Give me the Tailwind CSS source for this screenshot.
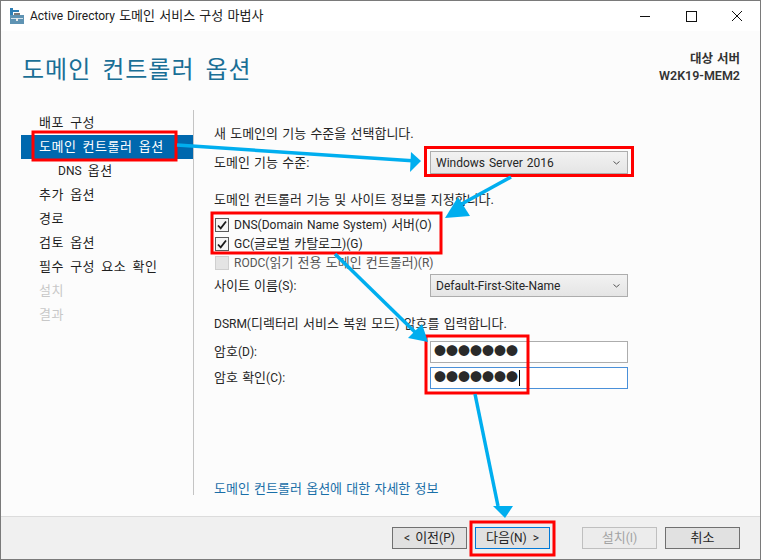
<!DOCTYPE html>
<html lang="ko">
<head>
<meta charset="utf-8">
<script src="https://cdn.jsdelivr.net/npm/@tailwindcss/browser@4"></script>
</head>
<body class="m-0 bg-white">
<div class="relative w-[761px] h-[560px] overflow-hidden flex flex-col bg-[#fcfcfc] border border-[#7a7a7a] font-['Roboto','Noto_Sans_CJK_KR',sans-serif] text-[13px] leading-[18px] text-[#262626] [word-spacing:1px]">
  <!-- title bar -->
  <div class="h-[30px] shrink-0 bg-white flex items-center pl-[9px]">
    <svg width="15" height="16" viewBox="0 0 15 16" class="shrink-0"><rect x="0" y="0" width="3" height="8" fill="#2e7fb5"/><rect x="0" y="2" width="9" height="2" fill="#2e7fb5"/><rect x="0" y="7" width="14" height="9" fill="#5f93b3"/><rect x="4" y="5" width="6" height="2" fill="#7a7a7a"/><rect x="1" y="10" width="12" height="1" fill="#d5e3ec"/><rect x="6" y="10" width="2" height="3" fill="#e8e8e8"/></svg>
    <span class="ml-[5px] text-[13px] text-[#202020]"><span class="text-[12px]">Active Directory</span> 도메인 서비스 구성 마법사</span>
    <div class="ml-auto flex items-center h-full">
      <svg width="46" height="30" viewBox="0 0 46 30"><path d="M18 15.5h10" stroke="#111" stroke-width="1"/></svg>
      <svg width="46" height="30" viewBox="0 0 46 30"><rect x="18.5" y="10.5" width="10" height="10" fill="none" stroke="#111"/></svg>
      <svg width="46" height="30" viewBox="0 0 46 30"><path d="M18 10l10 10M28 10l-10 10" stroke="#111" fill="none"/></svg>
    </div>
  </div>
  <!-- header -->
  <div class="h-[78px] shrink-0 flex items-start justify-between pl-[21px] pr-[20px]">
    <div class="mt-[19px] text-[24px] leading-[40px] text-[#1a6f96] tracking-[1px] [word-spacing:4px]">도메인 컨트롤러 옵션</div>
    <div class="mt-[19px] text-right text-[12.5px] font-semibold leading-[17px] text-[#333]">
      <div>대상 서버</div>
      <div>W2K19-MEM2</div>
    </div>
  </div>
  <!-- main -->
  <div class="flex-1 flex min-h-0">
    <nav class="w-[172px] ml-[20px] shrink-0 pt-[2px] tracking-[0.5px] [word-spacing:2.5px] text-[#1f1f1f]">
      <div class="h-[24px] pl-[18px] flex items-center">배포 구성</div>
      <div class="h-[24px] pl-[18px] flex items-center bg-[#0068ae] text-white">도메인 컨트롤러 옵션</div>
      <div class="h-[24px] pl-[37px] flex items-center"><span><span class="text-[12px] tracking-normal">DNS</span> 옵션</span></div>
      <div class="h-[24px] pl-[18px] flex items-center">추가 옵션</div>
      <div class="h-[24px] pl-[18px] flex items-center">경로</div>
      <div class="h-[24px] pl-[18px] flex items-center">검토 옵션</div>
      <div class="h-[24px] pl-[18px] flex items-center">필수 구성 요소 확인</div>
      <div class="h-[24px] pl-[18px] flex items-center text-[#c8c8c8]">설치</div>
      <div class="h-[24px] pl-[18px] flex items-center text-[#c8c8c8]">결과</div>
    </nav>
    <div class="w-px h-[385px] mt-[1px] bg-[#c4c4c4] shrink-0"></div>
    <section class="flex-1 pl-[20px] pt-[16px] pr-[132px] flex flex-col">
      <div class="h-[18px] flex items-center">새 도메인의 기능 수준을 선택합니다.</div>
      <div class="mt-[8px] h-[23px] flex items-center justify-between">
        <span>도메인 기능 수준:</span>
        <div class="w-[198px] h-[23px] border border-[#adadad] bg-gradient-to-b from-[#f2f2f2] to-[#e5e5e5] flex items-center justify-between pl-[5px] pr-[7px] text-[12px]">
          <span>Windows Server 2016</span>
          <svg width="7" height="4" viewBox="0 0 7 4"><path d="M0.5 0.5l3 2.5 3-2.5" fill="none" stroke="#555"/></svg>
        </div>
      </div>
      <div class="mt-[17px] h-[18px] flex items-center">도메인 컨트롤러 기능 및 사이트 정보를 지정합니다.</div>
      <div class="mt-[6px] h-[19px] flex items-center gap-[5px]">
        <span class="w-[14px] h-[14px] ml-[1px] border border-[#5a5a5a] bg-[#f5f5f5] flex items-center justify-center"><svg width="12" height="12" viewBox="0 0 12 12"><path d="M2 6.5l2.7 2.8L10 2.5" fill="none" stroke="#1a1a1a" stroke-width="1.8"/></svg></span>
        <span><span class="text-[12px]">DNS(Domain Name System)</span> 서버<span class="text-[12px]">(O)</span></span>
      </div>
      <div class="h-[19px] flex items-center gap-[5px]">
        <span class="w-[14px] h-[14px] ml-[1px] border border-[#5a5a5a] bg-[#f5f5f5] flex items-center justify-center"><svg width="12" height="12" viewBox="0 0 12 12"><path d="M2 6.5l2.7 2.8L10 2.5" fill="none" stroke="#1a1a1a" stroke-width="1.8"/></svg></span>
        <span><span class="text-[12px]">GC(</span>글로벌 카탈로그<span class="text-[12px]">)(G)</span></span>
      </div>
      <div class="h-[19px] flex items-center gap-[5px] text-[#555]">
        <span class="w-[14px] h-[14px] ml-[1px] border border-[#cfcfcf] bg-[#e4e4e4]"></span>
        <span><span class="text-[12px]">RODC(</span>읽기 전용 도메인 컨트롤러<span class="text-[12px]">)(R)</span></span>
      </div>
      <div class="mt-[2px] h-[23px] flex items-center justify-between">
        <span>사이트 이름<span class="text-[12px]">(S):</span></span>
        <div class="w-[198px] h-[23px] border border-[#adadad] bg-gradient-to-b from-[#f2f2f2] to-[#e5e5e5] flex items-center justify-between pl-[5px] pr-[7px] text-[12px]">
          <span>Default-First-Site-Name</span>
          <svg width="7" height="4" viewBox="0 0 7 4"><path d="M0.5 0.5l3 2.5 3-2.5" fill="none" stroke="#555"/></svg>
        </div>
      </div>
      <div class="mt-[18px] h-[18px] flex items-center"><span><span class="text-[12px]">DSRM(</span>디렉터리 서비스 복원 모드<span class="text-[12px]">)</span> 암호를 입력합니다.</span></div>
      <div class="mt-[8px] h-[22px] flex items-center justify-between">
        <span>암호<span class="text-[12px]">(D):</span></span>
        <div class="w-[198px] h-[22px] border border-[#adadad] bg-white flex items-center pl-[3px] text-[#2a2a2a] text-[12px]">●●●●●●●</div>
      </div>
      <div class="mt-[4px] h-[22px] flex items-center justify-between">
        <span>암호 확인<span class="text-[12px]">(C):</span></span>
        <div class="w-[198px] h-[22px] border border-[#4a90d9] bg-white flex items-center pl-[3px] text-[#2a2a2a] text-[12px]">●●●●●●●<span class="w-px h-[16px] bg-black ml-[1px]"></span></div>
      </div>
      <div class="mt-[91px] h-[18px] flex items-center text-[#1a6fa8] whitespace-nowrap">도메인 컨트롤러 옵션에 대한 자세한 정보</div>
    </section>
  </div>
  <!-- footer -->
  <div class="h-[43px] shrink-0 bg-[#f0f0f0] border-t border-[#dcdcdc] flex items-start pt-[10px] pl-[391px]">
    <button class="w-[75px] h-[22px] border border-[#707070] bg-[#e1e1e1] flex items-center justify-center gap-[5px]"><span class="text-[12px]">&lt;</span><span>이전<span class="text-[12px]">(P)</span></span></button>
    <button class="ml-[8px] w-[75px] h-[22px] border border-[#0078d7] bg-[#e1e1e1] flex items-center justify-center gap-[6px]"><span>다음<span class="text-[12px]">(N)</span></span><span class="text-[12px]">&gt;</span></button>
    <button class="ml-[32px] w-[75px] h-[22px] border border-[#bfbfbf] bg-[#ececec] text-[#a3a3a3] flex items-center justify-center"><span>설치<span class="text-[12px]">(I)</span></span></button>
    <button class="ml-[8px] w-[75px] h-[22px] border border-[#707070] bg-[#e1e1e1] flex items-center justify-center">취소</button>
  </div>
  <!-- annotations laid over the screenshot -->
  <svg class="absolute left-[-1px] top-[-1px] pointer-events-none" width="761" height="560" viewBox="0 0 761 560" fill="none">
    <g stroke="#ff0000" stroke-width="3">
      <rect x="33" y="132" width="143" height="28"/>
      <rect x="425.500" y="147.500" width="207" height="28"/>
      <rect x="212" y="213" width="229" height="40"/>
      <rect x="426" y="336" width="102" height="57"/>
      <rect x="471" y="522" width="83" height="33"/>
    </g>
    <g stroke="#00aeef" stroke-width="3.5">
      <path d="M177 145L416 161"/>
      <path d="M511 177L458 206"/>
      <path d="M335 254L418 335"/>
      <path d="M475 394L498 506"/>
    </g>
    <g fill="#00aeef">
      <path d="M421 161L411 152L410 172Z"/>
      <path d="M445 218L470 216L458 197Z"/>
      <path d="M428 342L408 338L422 324Z"/>
      <path d="M505 518L493 506L513 506Z"/>
    </g>
  </svg>
</div>
</body>
</html>
